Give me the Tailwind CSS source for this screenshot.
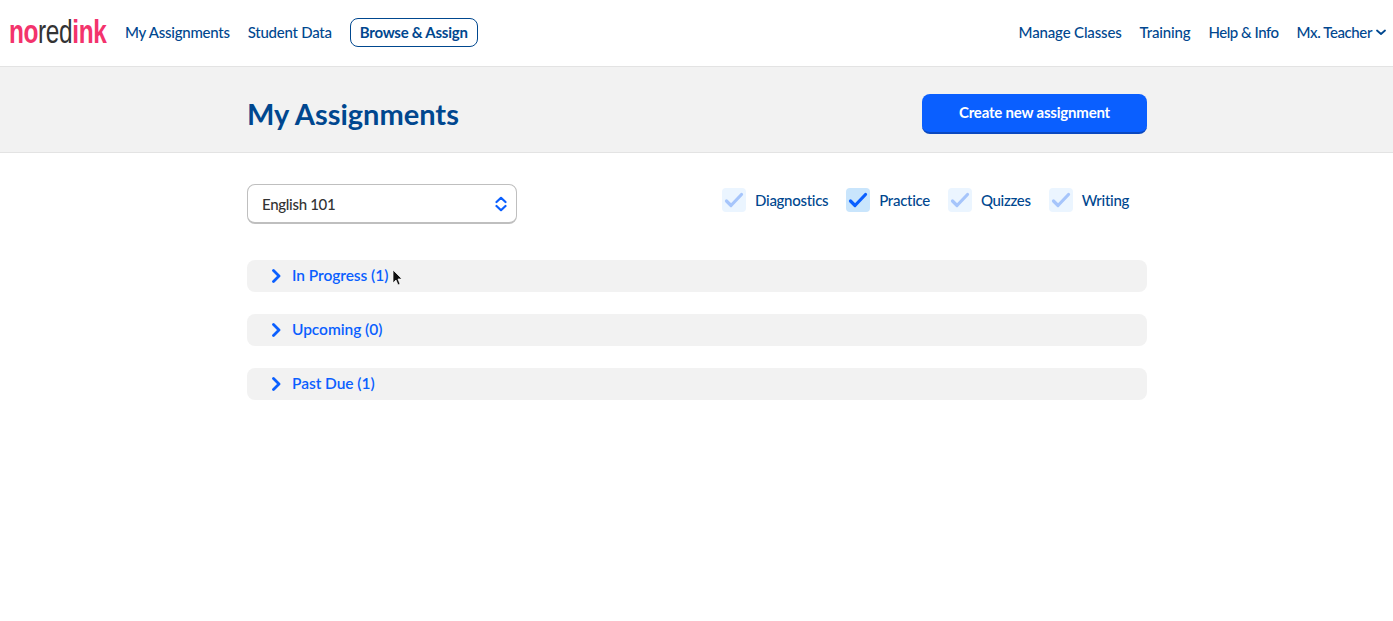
<!DOCTYPE html>
<html lang="en">
<head>
    <meta charset="UTF-8">
    <meta name="viewport" content="width=device-width, initial-scale=1.0">
    <title>My Assignments | NoRedInk</title>
    <script src="https://cdn.jsdelivr.net/npm/@tailwindcss/browser@4"></script>
</head>
<body class="bg-white font-['Lato',sans-serif] h-[621px] overflow-hidden">
    <!-- Top nav -->
    <nav class="h-[67px] border-b border-[#e3e3e3] flex items-center justify-between pl-[9px] pr-[7px] pb-[2px] text-[15px] tracking-[-0.25px] font-medium text-[#00478f]">
        <div class="flex items-center">
            <a href="#" class="w-[97px] h-[30px] mr-[19px] block overflow-visible">
                <span class="inline-block origin-left scale-x-[0.74] font-['Liberation_Sans',sans-serif] text-[33px] leading-[30px] tracking-[-0.5px] whitespace-nowrap"><span class="font-bold text-[#f3336c]">no</span><span class="font-normal text-[#333333]">red</span><span class="font-bold text-[#f3336c]">ink</span></span>
            </a>
            <a href="#" class="mr-[18px]">My Assignments</a>
            <a href="#" class="mr-[18px]">Student Data</a>
            <a href="#" class="h-[29px] px-[9px] flex items-center border border-[#00478f] rounded-lg font-bold">Browse &amp; Assign</a>
        </div>
        <div class="flex items-center">
            <a href="#" class="mr-[18px] tracking-[-0.15px]">Manage Classes</a>
            <a href="#" class="mr-[18px] tracking-[-0.15px]">Training</a>
            <a href="#" class="mr-[18px] tracking-[-0.5px]">Help &amp; Info</a>
            <a href="#" class="flex items-center gap-[4px] tracking-[-0.4px]">Mx. Teacher
                <svg class="w-[10px] h-[7px]" viewBox="0 0 10 7" fill="none" stroke="#00478f" stroke-width="1.8" stroke-linecap="round" stroke-linejoin="round"><path d="M1 1.5l4 3.5 4-3.500"/></svg>
            </a>
        </div>
    </nav>

    <!-- Page header -->
    <header class="h-[86px] bg-[#f2f2f2] border-b border-[#e3e3e3]">
        <div class="w-[900px] ml-[247px] h-full pt-[8px] flex items-center justify-between">
            <h1 class="text-[29px] font-bold text-[#00478f]">My Assignments</h1>
            <button class="w-[225px] h-[40px] bg-[#0a5fff] border-b-2 border-[#0a48c0] rounded-lg text-white text-[15px] tracking-[-0.2px] font-bold">Create new assignment</button>
        </div>
    </header>

    <main class="w-[900px] ml-[247px]">
        <!-- Filters -->
        <div class="flex items-start justify-between pt-[31px]">
            <div class="w-[270px] h-[40px] bg-white border border-[#bfbfbf] border-b-[2px] rounded-lg flex items-center justify-between pl-[14px] pr-[9px] text-[15px] text-[#333333] tracking-[-0.3px] font-medium">
                <span class="pt-[1px]">English 101</span>
                <svg class="w-[12px] h-[16px]" viewBox="0 0 12 16" fill="none" stroke="#0a5fff" stroke-width="2.2" stroke-linecap="round" stroke-linejoin="round"><path d="M1.5 6L6 1.8 10.5 6"/><path d="M1.500 10L6 14.200 10.500 10"/></svg>
            </div>
            <div class="flex items-center gap-[18px] pr-[18px] pt-[4px] text-[15px] tracking-[-0.3px] font-medium text-[#00478f]">
                <label class="flex items-center gap-[9px]">
                    <span class="w-[24px] h-[24px] rounded bg-[#ebf5ff] flex items-center justify-center">
                        <svg class="w-[20px] h-[16px]" viewBox="0 0 20 16" fill="none" stroke="#a6c5fb" stroke-width="3.2" stroke-linecap="round" stroke-linejoin="round"><path d="M2.5 9l4.5 4.5L17.5 2.5"/></svg>
                    </span>Diagnostics
                </label>
                <label class="flex items-center gap-[9px]">
                    <span class="w-[24px] h-[24px] rounded bg-[#c9e5fc] flex items-center justify-center">
                        <svg class="w-[20px] h-[16px]" viewBox="0 0 20 16" fill="none" stroke="#0a5fff" stroke-width="3.2" stroke-linecap="round" stroke-linejoin="round"><path d="M2.5 9l4.5 4.5L17.5 2.5"/></svg>
                    </span>Practice
                </label>
                <label class="flex items-center gap-[9px]">
                    <span class="w-[24px] h-[24px] rounded bg-[#ebf5ff] flex items-center justify-center">
                        <svg class="w-[20px] h-[16px]" viewBox="0 0 20 16" fill="none" stroke="#a6c5fb" stroke-width="3.2" stroke-linecap="round" stroke-linejoin="round"><path d="M2.5 9l4.5 4.5L17.5 2.5"/></svg>
                    </span>Quizzes
                </label>
                <label class="flex items-center gap-[9px]">
                    <span class="w-[24px] h-[24px] rounded bg-[#ebf5ff] flex items-center justify-center">
                        <svg class="w-[20px] h-[16px]" viewBox="0 0 20 16" fill="none" stroke="#a6c5fb" stroke-width="3.2" stroke-linecap="round" stroke-linejoin="round"><path d="M2.5 9l4.5 4.5L17.5 2.5"/></svg>
                    </span>Writing
                </label>
            </div>
        </div>

        <!-- Assignment groups -->
        <div class="mt-[36px] flex flex-col gap-[22px] text-[15.500px] font-semibold tracking-[-0.05px] text-[#0a5fff]">
            <div class="relative h-[32px] bg-[#f2f2f2] rounded-lg flex items-center pl-[25px] gap-[11px]">
                <svg class="w-[9px] h-[14px]" viewBox="0 0 9 14" fill="none" stroke="#0a5fff" stroke-width="2.8" stroke-linecap="round" stroke-linejoin="round"><path d="M1.5 1.5L7 7l-5.500 5.500"/></svg>
                <span>In Progress (1)</span>
                <!-- cursor -->
                <svg class="absolute left-[145px] top-[9px] w-[11px] h-[18px]" viewBox="0 0 11 18"><path d="M1 1v13l3-3 2 5 2-1-2-5h4z" fill="#111111" stroke="#ffffff" stroke-width="0.7"/></svg>
            </div>
            <div class="h-[32px] bg-[#f2f2f2] rounded-lg flex items-center pl-[25px] gap-[11px]">
                <svg class="w-[9px] h-[14px]" viewBox="0 0 9 14" fill="none" stroke="#0a5fff" stroke-width="2.8" stroke-linecap="round" stroke-linejoin="round"><path d="M1.5 1.5L7 7l-5.500 5.500"/></svg>
                <span>Upcoming (0)</span>
            </div>
            <div class="h-[32px] bg-[#f2f2f2] rounded-lg flex items-center pl-[25px] gap-[11px]">
                <svg class="w-[9px] h-[14px]" viewBox="0 0 9 14" fill="none" stroke="#0a5fff" stroke-width="2.8" stroke-linecap="round" stroke-linejoin="round"><path d="M1.5 1.5L7 7l-5.500 5.500"/></svg>
                <span>Past Due (1)</span>
            </div>
        </div>
    </main>
</body>
</html>
